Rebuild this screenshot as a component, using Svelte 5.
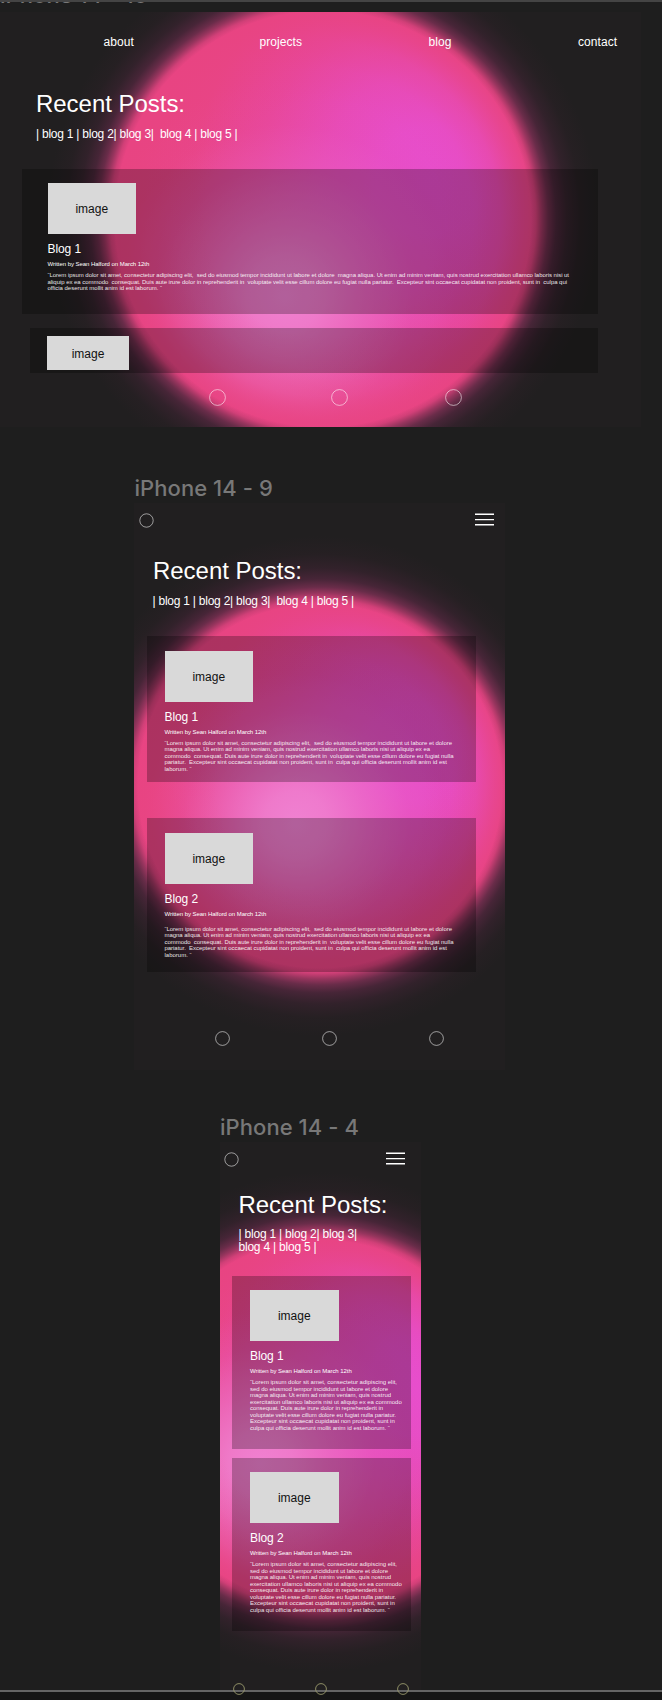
<script>
  const wide = [
    ['“Lorem ipsum dolor sit amet, consectetur adipiscing elit,  sed do eiusmod tempor incididunt ut labore et dolore  magna aliqua. Ut enim ad minim veniam, quis nostrud exercitation ullamco laboris nisi ut', 521.5],
    ['aliquip ex ea commodo  consequat. Duis aute irure dolor in reprehenderit in  voluptate velit esse cillum dolore eu fugiat nulla pariatur.  Excepteur sint occaecat cupidatat non proident, sunt in  culpa qui', 519.5],
    ['officia deserunt mollit anim id est laborum. “', 114.5]
  ];
  const medium = [
    ['“Lorem ipsum dolor sit amet, consectetur adipiscing elit,  sed do eiusmod tempor incididunt ut labore et dolore', 287.5],
    ['magna aliqua. Ut enim ad minim veniam, quis nostrud exercitation ullamco laboris nisi ut aliquip ex ea', 265.5],
    ['commodo  consequat. Duis aute irure dolor in reprehenderit in  voluptate velit esse cillum dolore eu fugiat nulla', 289],
    ['pariatur.  Excepteur sint occaecat cupidatat non proident, sunt in  culpa qui officia deserunt mollit anim id est', 282.3],
    ['laborum. “', 27]
  ];
  const narrow = [
    ['“Lorem ipsum dolor sit amet, consectetur adipiscing elit,', 147],
    ['sed do eiusmod tempor incididunt ut labore et dolore', 138],
    ['magna aliqua. Ut enim ad minim veniam, quis nostrud', 141],
    ['exercitation ullamco laboris nisi ut aliquip ex ea commodo', 151.7],
    ['consequat. Duis aute irure dolor in reprehenderit in', 133],
    ['voluptate velit esse cillum dolore eu fugiat nulla pariatur.', 146],
    ['Excepteur sint occaecat cupidatat non proident, sunt in', 144.7],
    ['culpa qui officia deserunt mollit anim id est laborum. “', 139.7]
  ];

  // Tracks a line of text so that it sets to the given measure.
  function measure(node, width) {
    const natural = node.getBoundingClientRect().width;
    node.style.letterSpacing = `${(width - natural) / node.textContent.length}px`;
  }
</script>

{#snippet line(text, width)}
  <div><span class="line" use:measure={width}>{text}</span></div>
{/snippet}

{#snippet post(title, lines, extra)}
  <article class="card {extra}">
    <div class="thumb">image</div>
    <h3>{@render line(title, 33.5)}</h3>
    <div class="meta">{@render line('Written by Sean Halford on March 12th', 101.7)}</div>
    <div class="copy">
      {#each lines as [text, width]}{@render line(text, width)}{/each}
    </div>
  </article>
{/snippet}

{#snippet mobileBar()}
  <header class="bar">
    <svg width="15" height="15" viewBox="0 0 15 15"><circle cx="7.5" cy="7.5" r="6.7" /></svg>
    <svg class="burger" width="19" height="13" viewBox="0 0 19 13">
      <path d="M0 1.2H19M0 6.6H19M0 11.8H19" />
    </svg>
  </header>
{/snippet}

{#snippet dots(size)}
  <footer class="dots">
    {#each [0, 1, 2] as i (i)}
      <svg width={size} height={size} viewBox="0 0 {size} {size}">
        <circle cx={size / 2} cy={size / 2} r={size / 2 - 0.6} />
      </svg>
    {/each}
  </footer>
{/snippet}

<main class="canvas">
  <div class="topline"></div>
  <div class="clip"><div class="label">iPhone 14 - 10</div></div>

  <section class="frame desktop">
    <nav><span>about</span><span>projects</span><span>blog</span><span>contact</span></nav>
    <h2>{@render line('Recent Posts:', 149)}</h2>
    <div class="links">{@render line('| blog 1 | blog 2| blog 3|  blog 4 | blog 5 |', 201.5)}</div>
    {@render post('Blog 1', wide, '')}
    <div class="card partial"><div class="thumb">image</div></div>
    {@render dots(17)}
  </section>

  <div class="label second">iPhone 14 - 9</div>
  <section class="frame tablet">
    {@render mobileBar()}
    <h2>{@render line('Recent Posts:', 149)}</h2>
    <div class="links">{@render line('| blog 1 | blog 2| blog 3|  blog 4 | blog 5 |', 201.5)}</div>
    {@render post('Blog 1', medium, '')}
    {@render post('Blog 2', medium, 'loose')}
    {@render dots(15)}
  </section>

  <div class="label third">iPhone 14 - 4</div>
  <section class="frame phone">
    {@render mobileBar()}
    <h2>{@render line('Recent Posts:', 149)}</h2>
    <div class="links">
      {@render line('| blog 1 | blog 2| blog 3|', 118.3)}
      {@render line('blog 4 | blog 5 |', 78)}
    </div>
    {@render post('Blog 1', narrow, '')}
    {@render post('Blog 2', narrow, '')}
    {@render dots(12)}
  </section>
  <div class="base"></div>
</main>

<style>
  :global(body) { background: #1e1e1e; }
  .canvas {
    width: 662px;
    height: 1700px;
    overflow: hidden;
    background: #1e1e1e;
    color: #fff;
    font: 12px/14px "Liberation Sans", Arial, sans-serif;
    display: flex;
    flex-direction: column;
    align-items: flex-start;
  }
  .canvas > * { flex: none; box-sizing: border-box; }
  .topline { width: 100%; height: 2px; background: #444; }
  .clip { height: 10px; overflow: hidden; }
  .clip .label { margin-top: -20px; }
  .label {
    font: 500 22px/26px Inter, sans-serif;
    height: 26px;
    color: #787878;
    white-space: nowrap;
    letter-spacing: 0.06px;
  }
  .second { margin: 48px 0 0 134.5px; }
  .third { margin: 44px 0 0 220px; }

  .frame {
    --bg: 33, 31, 32;
    overflow: hidden;
    display: flex;
    flex-direction: column;
    background:
      radial-gradient(circle at var(--x) var(--y),
        rgba(40, 32, 44, 0) calc(var(--r) - 6px),
        rgba(40, 32, 44, 0.12) calc(var(--r) - 1px),
        rgba(40, 32, 44, 0.42) calc(var(--r) + 5px),
        rgba(40, 32, 44, 0.66) calc(var(--r) + 11px),
        rgba(38, 31, 40, 0.83) calc(var(--r) + 19px),
        rgba(36, 31, 36, 0.93) calc(var(--r) + 30px),
        rgba(34, 31, 33, 0.98) calc(var(--r) + 44px),
        rgb(var(--bg)) calc(var(--r) + 62px)),
      radial-gradient(circle at var(--x) var(--y),
        rgba(232, 68, 130, 0) calc(var(--r) * 0.55),
        rgba(232, 68, 130, 0.08) calc(var(--r) * 0.7),
        rgba(232, 68, 130, 0.32) calc(var(--r) * 0.83),
        rgba(232, 68, 130, 0.75) calc(var(--r) * 0.93),
        rgba(232, 68, 130, 1) var(--r)),
      radial-gradient(circle at calc(var(--x) + var(--r) * var(--lx)) calc(var(--y) + var(--r) * var(--ly)),
        rgba(240, 132, 212, 0.95) 0,
        rgba(240, 130, 210, 0.86) calc(var(--r) * 0.17),
        rgba(238, 118, 205, 0.62) calc(var(--r) * 0.38),
        rgba(235, 97, 192, 0.34) calc(var(--r) * 0.6),
        rgba(233, 80, 165, 0.12) calc(var(--r) * 0.8),
        rgba(232, 72, 145, 0) calc(var(--r) * 1)),
      radial-gradient(circle at calc(var(--x) + var(--r) * 0.5) calc(var(--y) - var(--r) * 0.18),
        rgba(231, 78, 206, 1) 0,
        rgba(231, 78, 204, 0.96) calc(var(--r) * 0.25),
        rgba(231, 77, 198, 0.8) calc(var(--r) * 0.5),
        rgba(231, 74, 180, 0.5) calc(var(--r) * 0.8),
        rgba(232, 70, 150, 0.2) calc(var(--r) * 1.1),
        rgba(232, 68, 130, 0) calc(var(--r) * 1.35)),
      rgb(232, 68, 130);
  }
  .desktop { --x: 323px; --y: 207px; --r: 214px; --lx: -0.18; --ly: 0.36; width: 641px; height: 415px; }
  .tablet { --x: 186px; --y: 283px; --r: 188px; --lx: -0.13; --ly: 0.2; width: 371px; height: 567px; margin: 2px 0 0 134px; }
  .phone { --x: 101px; --y: 280px; --r: 188px; --lx: -0.32; --ly: 0.22; width: 201px; height: 548px; margin: 2px 0 0 220px; }

  nav {
    display: grid;
    grid-template-columns: 156px 169px 149.5px auto;
    letter-spacing: 0.06px;
    margin: 23px 0 0 103.5px;
  }
  h2, h3 { margin: 0; font-weight: 400; }
  h2 { font-size: 24px; line-height: 28px; }
  h3 { font-size: 12px; line-height: 14px; margin-top: 8px; }
  .line { display: inline-block; white-space: pre; vertical-align: top; }
  .links { line-height: 13px; }
  .desktop h2 { margin: 41px 0 0 36px; }
  .desktop .links { margin: 10px 0 0 36px; }
  .tablet h2 { margin: 29.5px 0 0 19px; }
  .tablet .links { margin: 10px 0 0 18.5px; }
  .phone h2 { margin: 23.5px 0 0 18.5px; }
  .phone .links { margin: 9.5px 0 0 18.5px; }

  .card { box-sizing: border-box; flex: none; background: rgba(0, 0, 0, 0.26); }
  .thumb {
    width: 88.5px;
    height: 51px;
    display: grid;
    place-items: center;
    background: #d9d9d9;
    color: #111;
    box-sizing: border-box;
    padding-top: 1px;
  }
  .meta { font-size: 6px; line-height: 6.5px; margin-top: 5px; }
  .copy { font-size: 6px; line-height: 6.5px; margin-top: 4.8px; color: rgba(255, 255, 255, 0.9); }
  .copy > :global(div) { height: 6.5px; }
  .loose .copy { margin-top: 8.5px; }

  .desktop .card { width: 576px; height: 145px; margin: 28px 0 0 22px; padding: 14px 0 0 25.5px; }
  .desktop .partial { width: 568.5px; height: 45px; margin: 14px 0 0 29.5px; padding: 8px 0 0 17.5px; }
  .partial .thumb { width: 82px; height: 34px; }

  .tablet .card { width: 329px; height: 145.5px; margin: 28px 0 0 12.5px; padding: 14.5px 0 0 18px; }
  .tablet .loose { height: 153.5px; margin-top: 36.5px; }

  .phone .card { width: 178.5px; height: 173.5px; margin: 8.5px 0 0 12px; padding: 14.5px 0 0 18px; }
  .phone .links + .card { margin-top: 21.5px; }

  .bar { display: flex; justify-content: space-between; height: 15px; flex: none; }
  .tablet .bar { margin: 9.5px 11px 0 4.5px; }
  .phone .bar { margin: 10px 16px 0 4px; }
  svg { display: block; overflow: visible; }
  circle { fill: none; stroke: rgba(255, 255, 255, 0.62); stroke-width: 0.9; }
  .burger path { stroke: #fff; stroke-width: 1.4; }

  .dots { display: flex; flex: none; }
  .desktop .dots { margin: 16px 0 0 209px; gap: 105px; }
  .desktop .dots svg:last-child { margin-left: -8px; }
  .tablet .dots { margin: 59.5px 0 0 81px; gap: 92px; }
  .phone { overflow: visible; position: relative; z-index: 1; }
  .phone .dots { margin: 51.7px 0 0 12.7px; gap: 70.3px; }
  .phone .dots circle { stroke: #98986c; }
  .base { width: 100%; height: 10px; border-top: 2px solid #646464; background: #151515; }
</style>
